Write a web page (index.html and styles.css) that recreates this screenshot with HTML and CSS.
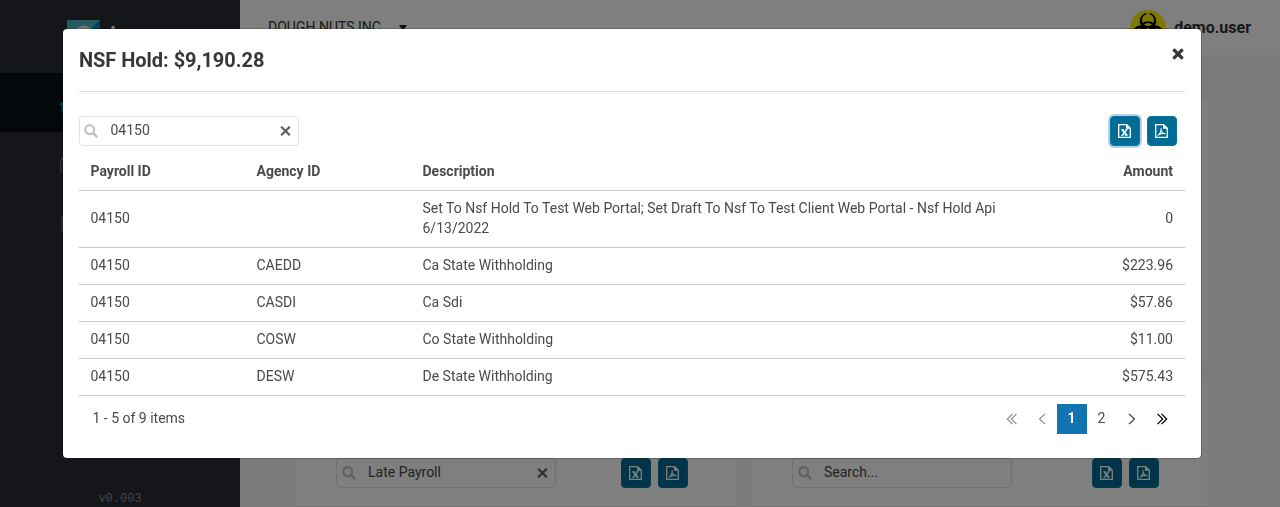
FILE: index.html
```html
<!DOCTYPE html>
<html lang="en">
<head>
<meta charset="utf-8">
<title>NSF Hold</title>
<link rel="stylesheet" href="styles.css">
</head>
<body>
<svg class="defs" width="0" height="0">
  <symbol id="search" viewBox="0 0 14 14"><circle cx="5.7" cy="5.7" r="4.5" fill="none" stroke="currentColor" stroke-width="2.2"/><path d="M9 9l3.6 3.6" stroke="currentColor" stroke-width="2.5" stroke-linecap="round"/></symbol>
  <symbol id="clear" viewBox="0 0 11 11"><path d="M1.200 .7l8.600 8.600M9.800 .7l-8.600 8.600" stroke="currentColor" stroke-width="2.200" fill="none"/></symbol>
  <symbol id="excel" viewBox="0 0 13 14"><path d="M.7.7h8l3.6 3.6v9H.7z" fill="none" stroke="currentColor" stroke-width="1.3"/><path d="M8 .3v4.4h4.7z" fill="currentColor"/><path d="M3.2 5.7h2.6M7.4 5.7h2.3M3.2 11.2h2.5M7.2 11.2h2.6" stroke="currentColor"/><path d="M4.4 5.8l4.2 5.4" stroke="currentColor" stroke-width="2"/><path d="M8.6 5.8l-4.2 5.4" stroke="currentColor" stroke-width="1.3"/></symbol>
  <symbol id="pdf" viewBox="0 0 13 14"><path d="M.7.7h8l3.6 3.6v9H.7z" fill="none" stroke="currentColor" stroke-width="1.3"/><path d="M8 .3v4.4h4.7z" fill="currentColor"/><path d="M6 4.2c.6 2.8-.6 5.2-3.2 7.4M3 11.2c2-1.7 4.500-2.200 7.500-1.500M6.100 6c.6 2.200 2 3.600 4.300 3.900" fill="none" stroke="currentColor" stroke-width="1.1"/></symbol>
  <symbol id="horn" viewBox="0 0 36 36"><path fill-rule="evenodd" d="M9.700 11a8.300 8.300 0 1 0 16.600 0a8.300 8.300 0 1 0-16.600 0zM12 9.900a6 6 0 1 0 12 0a6 6 0 1 0-12 0z"/><path d="M16.300 1.500h3.400v3h-3.400z" fill="#fff000"/></symbol>
</svg>

<div class="app">
  <aside class="sidebar">
    <div class="brand">
      <svg width="33" height="33" viewBox="0 0 33 33"><path d="M0 0h33v33H0z" fill="#4bb7c1"/><path d="M33 0v33H0z" fill="#0684b4"/><circle cx="16.500" cy="16" r="10.500" fill="#e4e4e4"/></svg>
      <span class="brand-name">i</span>
    </div>
    <div class="nav-item active"><svg width="16" height="16" viewBox="0 0 16 16"><path d="M0 7l8-6 8 6M2.500 5.500V14h11V5.500" fill="none" stroke="#0e9a9f" stroke-width="1.500"/></svg></div>
    <div class="nav-item"><svg width="16" height="16" viewBox="0 0 16 16"><rect x=".7" y="3" width="14" height="12" rx="2" fill="none" stroke="#85878a"/><path d="M2 3V1h5" fill="none" stroke="#85878a"/></svg></div>
    <div class="nav-item last"><svg width="14" height="16" viewBox="0 0 14 16"><rect x="1" y=".7" width="12" height="14" fill="none" stroke="#85878a"/></svg></div>
    <div class="version">v0.003</div>
  </aside>
  <div class="page">
    <header class="topbar">
      <span class="company">DOUGH NUTS INC</span>
      <span class="caret"></span>
      <div class="user">
        <svg width="36" height="36" viewBox="0 0 36 36"><circle cx="18" cy="18" r="18" fill="#fff000"/><use href="#horn" width="36" height="36"/><use href="#horn" width="36" height="36" transform="rotate(120 18 19.500)"/><use href="#horn" width="36" height="36" transform="rotate(240 18 19.500)"/><circle cx="18" cy="19.500" r="7.400" fill="none" stroke="#000" stroke-width="1.700"/><circle cx="18" cy="19.500" r="1.600" fill="#fff000"/></svg>
        <span>demo.user</span>
      </div>
    </header>
    <main class="cards">
      <section class="card"></section>
      <section class="card"></section>
      <section class="card">
        <div class="tools">
          <div class="search"><svg class="glass"><use href="#search"/></svg><span>Late Payroll</span><svg class="x"><use href="#clear"/></svg></div>
          <div class="exports"><button class="export"><svg><use href="#excel"/></svg></button><button class="export"><svg><use href="#pdf"/></svg></button></div>
        </div>
      </section>
      <section class="card">
        <div class="tools">
          <div class="search"><svg class="glass"><use href="#search"/></svg><span>Search...</span></div>
          <div class="exports"><button class="export"><svg><use href="#excel"/></svg></button><button class="export"><svg><use href="#pdf"/></svg></button></div>
        </div>
      </section>
    </main>
  </div>
</div>

<div class="overlay">
  <div class="modal">
    <div class="modal-head">
      <h1>NSF Hold: $9,190.28</h1>
      <svg class="close" viewBox="0 0 12 12"><path d="M2.500 2.500l7 7M9.500 2.500l-7 7" stroke="#373737" stroke-width="3.200" stroke-linecap="square"/></svg>
    </div>
    <div class="tools">
      <div class="search"><svg class="glass"><use href="#search"/></svg><span>04150</span><svg class="x"><use href="#clear"/></svg></div>
      <div class="exports"><button class="export focused"><svg><use href="#excel"/></svg></button><button class="export"><svg><use href="#pdf"/></svg></button></div>
    </div>
    <table class="grid">
      <thead><tr><th>Payroll ID</th><th>Agency ID</th><th>Description</th><th>Amount</th></tr></thead>
      <tbody>
        <tr><td>04150</td><td></td><td>Set To Nsf Hold To Test Web Portal; Set Draft To Nsf To Test Client Web Portal - Nsf Hold Api 6/13/2022</td><td>0</td></tr>
        <tr><td>04150</td><td>CAEDD</td><td>Ca State Withholding</td><td>$223.96</td></tr>
        <tr><td>04150</td><td>CASDI</td><td>Ca Sdi</td><td>$57.86</td></tr>
        <tr><td>04150</td><td>COSW</td><td>Co State Withholding</td><td>$11.00</td></tr>
        <tr><td>04150</td><td>DESW</td><td>De State Withholding</td><td>$575.43</td></tr>
      </tbody>
    </table>
    <div class="footer">
      <span class="count">1 - 5 of 9 items</span>
      <div class="pager">
        <span class="off"><svg viewBox="0 0 12 12"><path d="M6.500 .8L1.300 6l5.200 5.200M10.500 .8L5.300 6l5.200 5.200"/></svg></span>
        <span class="off"><svg viewBox="0 0 12 12"><path d="M9 .8L3.500 6 9 11.200"/></svg></span>
        <span class="num current">1</span>
        <span class="num">2</span>
        <span><svg viewBox="0 0 12 12"><path d="M3 .8L8.500 6 3 11.200"/></svg></span>
        <span class="end"><svg viewBox="0 0 12 12"><path d="M1.500 .8L6.700 6l-5.200 5.200M5.500 .8L10.700 6l-5.200 5.200"/></svg></span>
      </div>
    </div>
  </div>
</div>
</body>
</html>
```
FILE: styles.css
```css
* { box-sizing: border-box; }
body { margin: 0; height: 507px; overflow: hidden; font: 14px/20px Roboto, sans-serif; color: #4a4a4a; }
svg { display: block; }
.defs { position: absolute; }

.app { display: flex; height: 507px; }
.sidebar { width: 240px; background: #2b2d35; display: flex; flex-direction: column; }
.brand { height: 73px; padding: 20px 0 0 67px; display: flex; gap: 10px; }
.brand-name { color: #fff; font: 700 22px/28px Roboto, sans-serif; padding-top: 2px; }
.nav-item { height: 59px; padding: 25px 0 0 60px; }
.nav-item.active { background: #08101a; }
.nav-item.last { padding-left: 61px; }
.version { margin-top: auto; text-align: center; font: 12px/15px "Liberation Mono", monospace; color: #85878c; }

.page { flex: 1; background: #f7f7f7; display: flex; flex-direction: column; }
.topbar { height: 55px; background: #fff; display: flex; align-items: center; padding: 0 29px 0 28px; }
.company { color: #333; padding-bottom: 1px; }
.caret { margin-left: 18px; border: 4px solid transparent; border-top: 6px solid #222; border-bottom: 0; }
.user { margin-left: auto; display: flex; align-items: center; gap: 8px; font-weight: 700; font-size: 16px; color: #333; }

.cards { padding: 45px 73px 0 56px; display: grid; grid-template-columns: 440px 455px; grid-template-rows: 266px 125px; gap: 16px; }
.card { background: #fff; }
.card .tools { padding: 76px 48px 18px 40px; border-bottom: 1px solid #e4e4e4; }
.card .search { color: #454545; padding-left: 4.500px; }

.tools { display: flex; justify-content: space-between; align-items: center; }
.search { width: 220px; height: 30px; border: 1px solid #e2e2e2; border-radius: 4px; display: flex; align-items: center; padding: 0 7px 2px 4px; }
.glass { width: 14px; height: 14px; margin: 2px 12.500px 0 0; color: #c4c4c4; }
.x { width: 11px; height: 11px; margin: 2px 0 0 auto; color: #606060; }
.exports { display: flex; gap: 7px; }
.export { width: 30px; height: 30px; padding: 0 1px 0 0; border: 1px solid #0a75a5; border-radius: 4px; background: #006b93; color: #fff; display: grid; place-items: center; }
.export svg { width: 13px; height: 14px; }
.focused { box-shadow: 0 0 0 2px #b5d3e8; }

.overlay { position: fixed; inset: 0; background: rgba(0, 0, 0, .5); padding: 28px 0 0 62px; }
.modal { width: 1140px; height: 431px; background: #fff; background-clip: padding-box; border: 1px solid rgba(0, 0, 0, .2); border-radius: 5px; padding: 0 16px; }
.modal-head { height: 63px; border-bottom: 1px solid #dedede; display: flex; justify-content: space-between; }
h1 { margin: 19px 0 0; font-size: 20px; line-height: 24px; font-weight: 700; letter-spacing: -.03px; color: #373737; }
.close { width: 12px; height: 12px; margin: 19px 1px 0 0; }
.modal .tools { padding: 24px 8px 0 0; }

.grid { width: 100%; table-layout: fixed; border-collapse: separate; border-spacing: 0; margin-top: 5px; }
.grid th, .grid td { padding: 7px 12px 9px 11.500px; text-align: left; border-bottom: 1px solid #c8c8c8; }
.grid th { height: 40px; font-weight: 700; padding-top: 10px; padding-bottom: 9px; }
.grid th:nth-child(-n+2) { width: 166px; }
.grid th:nth-child(3) { width: 608px; }
.grid th:last-child, .grid td:last-child { text-align: right; }
.footer { padding: 8px 8px 0 13.500px; display: flex; justify-content: space-between; align-items: center; }
.count { padding-bottom: 2px; }
.pager { display: flex; }
.pager span { width: 30px; height: 30px; display: grid; place-items: center; }
.pager .num { padding: 0 1px 2px 0; }
.pager svg { width: 12px; height: 12px; margin-right: 1px; fill: none; stroke: #333; stroke-width: 1.100; }
.pager .off svg { stroke: #888; }
.pager .end svg { stroke: #000; stroke-width: 1.200; }
.pager .current { background: #1274b0; color: #fff; font-weight: 700; }
```
